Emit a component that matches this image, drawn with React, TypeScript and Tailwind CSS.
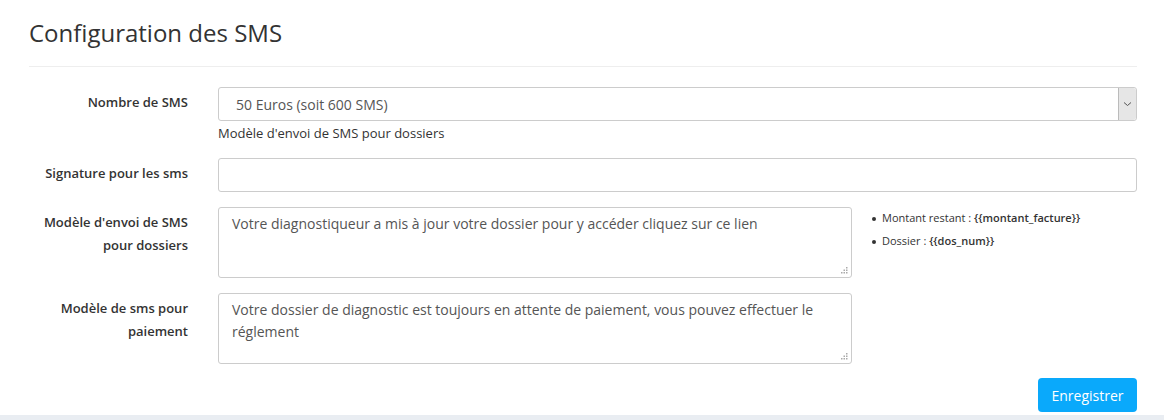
import React from 'react';

const font = { fontFamily: '"Open Sans", "Liberation Sans", sans-serif' };

function Label({ children }: { children: React.ReactNode }) {
  return (
    <div className="w-[159px] shrink-0 text-right text-[13px] font-semibold leading-[23px] text-[#333] pt-[4px]">
      {children}
    </div>
  );
}

export default function App() {
  return (
    <div className="w-[1164px] h-[420px] bg-[#e9edf2] overflow-hidden" style={font}>
      <div className="bg-white h-[415px] px-[29px] pr-[27px]">
        <h1 className="pt-[16px] text-[24px] leading-[33px] text-[#333]">Configuration des SMS</h1>
        <div className="mt-[17px] border-t border-[#eee]" />

        <div className="mt-[20px] flex gap-[30px]">
          <Label>Nombre de SMS</Label>
          <div className="flex-1">
            <div className="relative h-[34px] rounded-[3px] border border-[#ccc] bg-white flex items-center pl-[17px] text-[14px] text-[#555]">
              50 Euros (soit 600 SMS)
              <div className="absolute right-0 top-0 bottom-0 w-[18px] bg-[#e6e6e6] border-l border-[#bbb] rounded-r-[3px] flex items-center justify-center">
                <svg width="9" height="6" viewBox="0 0 9 6" fill="none">
                  <path d="M1 1.5L4.5 4.5L8 1.5" stroke="#555" strokeWidth="1" />
                </svg>
              </div>
            </div>
            <p className="mt-[2px] text-[13px] leading-[20px] text-[#333]">Modèle d'envoi de SMS pour dossiers</p>
          </div>
        </div>

        <div className="mt-[15px] flex gap-[30px]">
          <Label>Signature pour les sms</Label>
          <div className="flex-1 h-[34px] rounded-[3px] border border-[#ccc] bg-white" />
        </div>

        <div className="mt-[15px] flex gap-[30px]">
          <Label>
            Modèle d'envoi de SMS
            <br />
            pour dossiers
          </Label>
          <div className="relative w-[634px] h-[71px] rounded-[3px] border border-[#ccc] bg-white px-[13px] py-[5px] text-[14px] leading-[22px] text-[#555]">
            Votre diagnostiqueur a mis à jour votre dossier pour y accéder cliquez sur ce lien
            <Grip />
          </div>
          <ul className="ml-[-10px] mt-[-1px] text-[11px] leading-[23px] text-[#333]">
            <li>
              <span className="inline-block w-[4px] h-[4px] rounded-full bg-[#333] align-middle mr-[6px]" />
              Montant restant : <b className="font-semibold">{'{{montant_facture}}'}</b>
            </li>
            <li>
              <span className="inline-block w-[4px] h-[4px] rounded-full bg-[#333] align-middle mr-[6px]" />
              Dossier : <b className="font-semibold">{'{{dos_num}}'}</b>
            </li>
          </ul>
        </div>

        <div className="mt-[15px] flex gap-[30px]">
          <Label>
            Modèle de sms pour
            <br />
            paiement
          </Label>
          <div className="relative w-[634px] h-[71px] rounded-[3px] border border-[#ccc] bg-white px-[13px] py-[5px] text-[14px] leading-[22px] text-[#555]">
            Votre dossier de diagnostic est toujours en attente de paiement, vous pouvez effectuer le réglement
            <Grip />
          </div>
        </div>

        <div className="mt-[14px] flex justify-end">
          <button className="h-[34px] w-[99px] rounded-[4px] bg-[#0aa9fb] text-white text-[14px]">Enregistrer</button>
        </div>
      </div>
    </div>
  );
}

function Grip() {
  return (
    <svg className="absolute right-[3px] bottom-[3px]" width="7" height="7" viewBox="0 0 7 7">
      <rect x="5" y="0" width="1.5" height="1.5" fill="#aaa" />
      <rect x="2.5" y="2.5" width="1.5" height="1.5" fill="#aaa" />
      <rect x="5" y="2.5" width="1.5" height="1.5" fill="#aaa" />
      <rect x="0" y="5" width="1.5" height="1.5" fill="#aaa" />
      <rect x="2.5" y="5" width="1.5" height="1.5" fill="#aaa" />
      <rect x="5" y="5" width="1.5" height="1.5" fill="#aaa" />
    </svg>
  );
}
